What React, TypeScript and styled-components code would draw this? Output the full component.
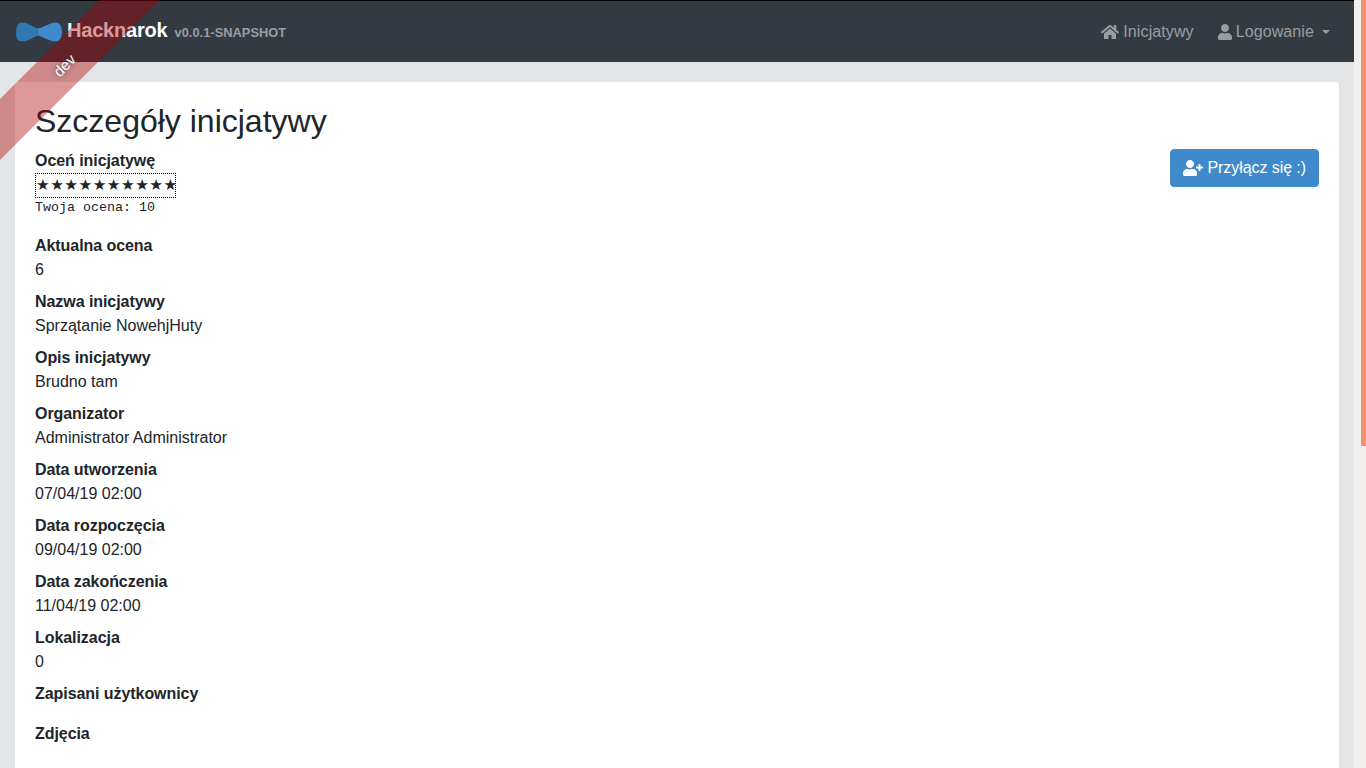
import { FaHome, FaUser, FaUserPlus } from "react-icons/fa";
import styled, { createGlobalStyle } from "styled-components";

const GlobalStyle = createGlobalStyle`
	html, body {
		margin: 0;
		height: 100%;
	}
	body {
		font-family: "Liberation Sans", Arial, sans-serif;
		font-size: 16px;
		line-height: 1.5;
		color: #212529;
		background: #e4e5e6;
		text-rendering: optimizeSpeed;
	}
`;

const Page = styled.div`
	position: relative;
	display: flex;
	height: 768px;
	overflow: hidden;
`;

const Main = styled.div`
	flex: 1;
	min-width: 0;
`;

const Navbar = styled.nav`
	display: flex;
	align-items: center;
	justify-content: space-between;
	height: 61px;
	padding: 0 16px;
	border-top: 1px solid #000;
	background: #343a41;
`;

const Brand = styled.a`
	display: flex;
	align-items: center;
	gap: 5px;
	color: #fff;
`;

const BrandName = styled.span`
	padding-bottom: 3px;
	font-size: 20px;
	font-weight: 700;
	letter-spacing: -0.2px;
`;

const Version = styled.span`
	margin-left: 2px;
	padding-top: 2px;
	font-size: 12.8px;
	font-weight: 700;
	letter-spacing: 0.05px;
	color: #9a9ea3;
`;

const NavList = styled.div`
	display: flex;
	align-items: center;
	gap: 8px;
`;

const NavLink = styled.a`
	display: flex;
	align-items: center;
	gap: 4px;
	padding: 8px;
	color: #9a9ea3;
	letter-spacing: 0.1px;
`;

const Caret = styled.span`
	margin-left: 4px;
	width: 0;
	height: 0;
	border-top: 4.8px solid #9a9ea3;
	border-left: 4.8px solid transparent;
	border-right: 4.8px solid transparent;
`;

const Content = styled.main`
	padding: 20px 15px 0;
`;

const Card = styled.section`
	min-height: 1200px;
	padding: 20px;
	border-radius: 4px;
	background: #fff;
`;

const Title = styled.h2`
	margin: 0 0 8.6px;
	font-size: 32px;
	font-weight: 400;
	line-height: 1.2;
`;

const DetailRow = styled.div`
	display: flex;
	justify-content: space-between;
	align-items: flex-start;
`;

const DetailList = styled.dl`
	margin: 0;
`;

const Label = styled.dt`
	font-weight: 700;
	letter-spacing: -0.06px;
`;

const Value = styled.dd`
	margin: 0 0 8px;
	min-height: 8px;
`;

const Stars = styled.div`
	display: flex;
	box-sizing: border-box;
	width: 141px;
	height: 25px;
	align-items: center;
	border: 1px dotted #000;
	font-family: "DejaVu Sans", sans-serif;
	font-size: 15.3px;
	letter-spacing: 0.45px;
	line-height: 1;
`;

const Score = styled.pre`
	margin: 0 0 17px;
	font-family: "Liberation Mono", monospace;
	font-size: 13.33px;
	line-height: 19px;
`;

const JoinButton = styled.button`
	display: flex;
	align-items: center;
	gap: 4px;
	height: 38px;
	padding: 0 12px;
	border: 1px solid #3e8acc;
	border-radius: 4px;
	background: #3e8acc;
	color: #fff;
	font: inherit;
	letter-spacing: -0.07px;
`;

const ScrollTrack = styled.aside`
	display: flex;
	justify-content: flex-end;
	flex: 0 0 12px;
	background: #f1f0ee;
`;

const ScrollThumb = styled.div`
	width: 5px;
	height: 446px;
	background: #f1926b;
`;

const Ribbon = styled.div`
	position: absolute;
	top: 43px;
	left: -55px;
	box-sizing: border-box;
	width: 240px;
	height: 43px;
	padding-right: 2px;
	background: rgba(170, 0, 0, 0.4);
	color: #fff;
	font-size: 15px;
	line-height: 43px;
	text-align: center;
	text-shadow: 0 0 5px #444;
	transform: rotate(-45deg);
	pointer-events: none;
`;

interface IDetail {
	label: string;
	value: string;
}

const details: IDetail[] = [
	{ label: "Aktualna ocena", value: "6" },
	{ label: "Nazwa inicjatywy", value: "Sprzątanie NowehjHuty" },
	{ label: "Opis inicjatywy", value: "Brudno tam" },
	{ label: "Organizator", value: "Administrator Administrator" },
	{ label: "Data utworzenia", value: "07/04/19 02:00" },
	{ label: "Data rozpoczęcia", value: "09/04/19 02:00" },
	{ label: "Data zakończenia", value: "11/04/19 02:00" },
	{ label: "Lokalizacja", value: "0" },
	{ label: "Zapisani użytkownicy", value: "" },
	{ label: "Zdjęcia", value: "" },
];

function Logo() {
	return (
		<svg width="46" height="20" viewBox="0 0 46 20">
			<path
				d="M22 6.5C18 5.5 12 0.5 6 0.5C2 0.5 0 5 0 11C0 16 2 19.5 6 19.5C12 19.5 18 15 22 13.5Z"
				fill="#2f78b0"
			/>
			<path
				d="M22 6.5C27 5.5 34 0.5 40 0.5C44 0.5 46 5 46 10C46 15 44 19.5 40 19.5C34 19.5 27 15 22 13.5Z"
				fill="#3e8acc"
			/>
		</svg>
	);
}

function App() {
	return (
		<Page>
			<GlobalStyle />
			<Main>
				<Navbar>
					<Brand>
						<Logo />
						<BrandName>Hacknarok</BrandName>
						<Version>v0.0.1-SNAPSHOT</Version>
					</Brand>
					<NavList>
						<NavLink>
							<FaHome style={{ width: 18, height: 16 }} />
							Inicjatywy
						</NavLink>
						<NavLink>
							<FaUser style={{ width: 14, height: 16 }} />
							Logowanie
							<Caret />
						</NavLink>
					</NavList>
				</Navbar>
				<Content>
					<Card>
						<Title>Szczegóły inicjatywy</Title>
						<DetailRow>
							<DetailList>
								<Label>Oceń inicjatywę</Label>
								<Stars>★★★★★★★★★★</Stars>
								<Score>Twoja ocena: 10</Score>
								{details.map((detail) => (
									<div key={detail.label}>
										<Label>{detail.label}</Label>
										<Value>{detail.value}</Value>
									</div>
								))}
							</DetailList>
							<JoinButton>
								<FaUserPlus style={{ width: 20, height: 16 }} />
								Przyłącz się :)
							</JoinButton>
						</DetailRow>
					</Card>
				</Content>
			</Main>
			<ScrollTrack>
				<ScrollThumb />
			</ScrollTrack>
			<Ribbon>dev</Ribbon>
		</Page>
	);
}

export default App;
